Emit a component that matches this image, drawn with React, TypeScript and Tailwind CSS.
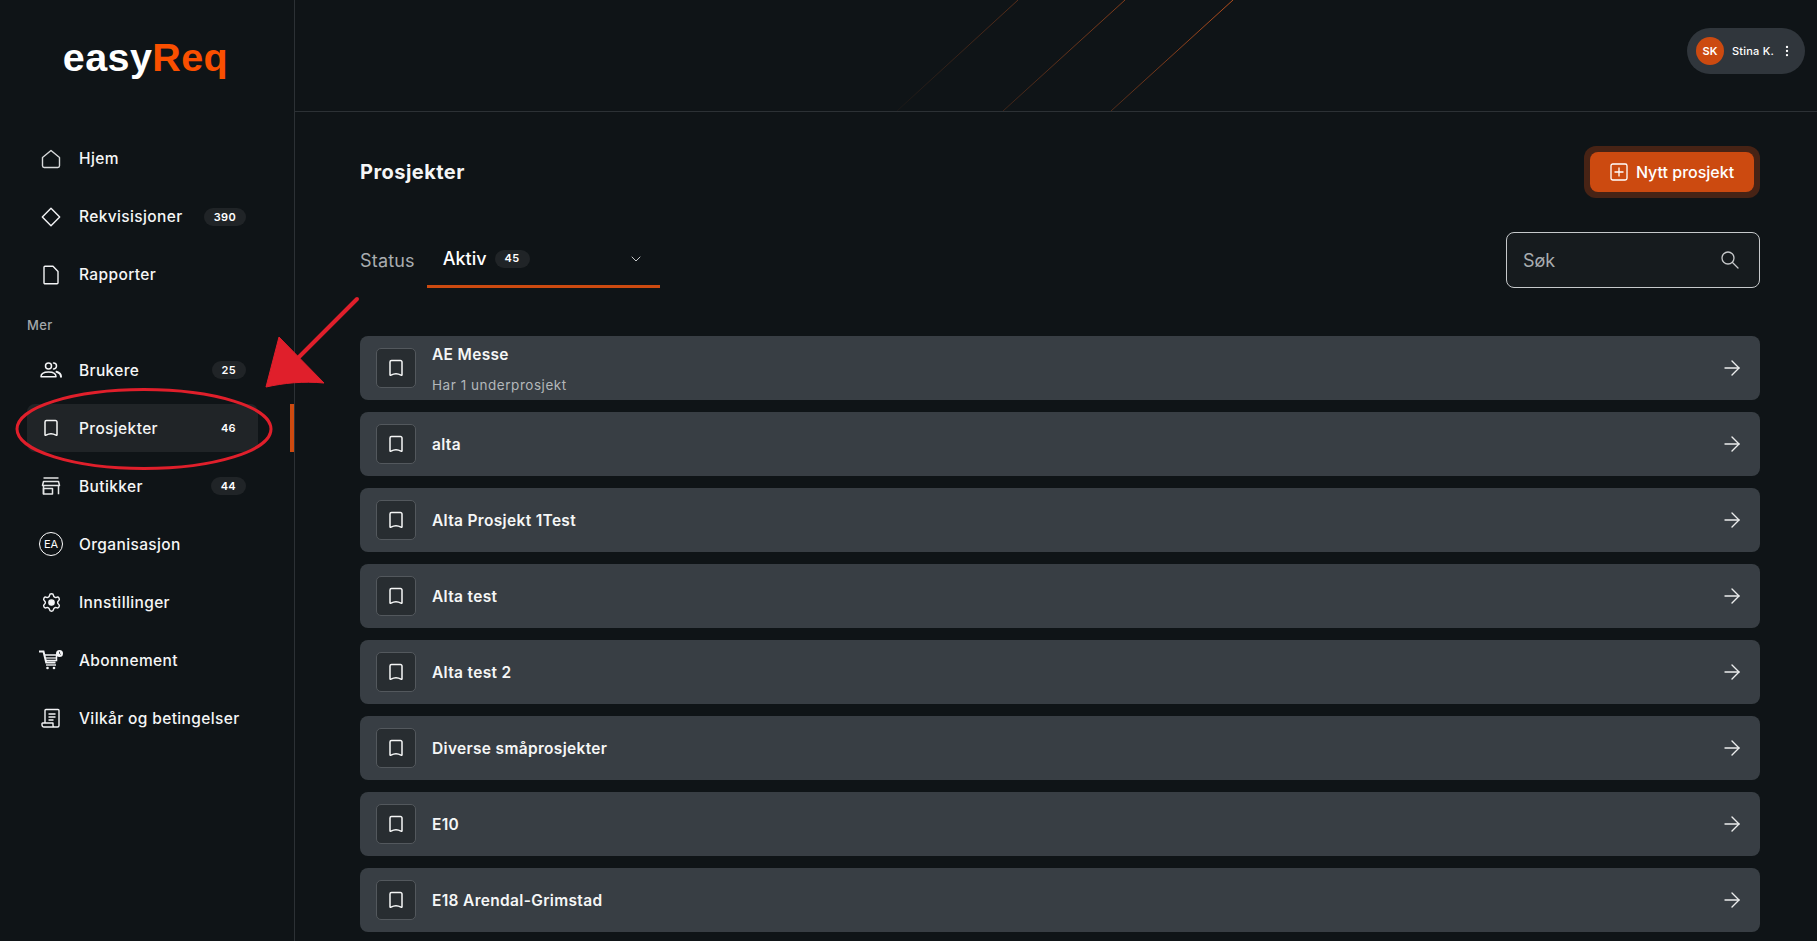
import { ArrowRight, ChevronDown, EllipsisVertical, Settings } from "lucide-react";

const font = { fontFamily: "Inter" };

function Badge({ children, bare }: { children: string; bare?: boolean }) {
  return (
    <span
      className={`flex h-[18px] items-center justify-center rounded-full px-[10px] text-[11px] font-semibold tracking-[0.03em] text-white ${
        bare ? "" : "bg-[#202427]"
      }`}
    >
      {children}
    </span>
  );
}

function BookmarkIcon() {
  return (
    <svg width="16" height="18" viewBox="0 0 16 18" fill="none" stroke="#f5f6f6" strokeWidth="1.5" strokeLinejoin="round">
      <path d="M2 3a1.500 1.500 0 0 1 1.500-1.500h9A1.500 1.500 0 0 1 14 3v12.700c0 .6-.5.8-1 .5-3.300-2-6.700-2-10 0-.5.3-1 .1-1-.5z" />
    </svg>
  );
}

function HomeIcon() {
  return (
    <svg width="20" height="20" viewBox="0 0 20 20" fill="none" stroke="#d8dadb" strokeWidth="1.4" strokeLinejoin="round">
      <path d="M1.500 8.500 10 1.500l8.500 7v8.300a1.700 1.700 0 0 1-1.700 1.700H3.200a1.700 1.700 0 0 1-1.700-1.700z" />
    </svg>
  );
}

function DiamondIcon() {
  return (
    <svg width="20" height="20" viewBox="0 0 20 20" fill="none" stroke="#f3f4f6" strokeWidth="1.4" strokeLinejoin="round">
      <path d="M10 1.300 18.700 10 10 18.700 1.300 10z" />
    </svg>
  );
}

function FileIcon() {
  return (
    <svg width="20" height="20" viewBox="0 0 20 20" fill="none" stroke="#f3f4f6" strokeWidth="1.4" strokeLinejoin="round">
      <path d="M3 2.200a1 1 0 0 1 1-1h8l5 5.300v11.300a1 1 0 0 1-1 1H4a1 1 0 0 1-1-1z" />
    </svg>
  );
}

function UsersIcon() {
  return (
    <svg width="22" height="16" viewBox="0 0 22 16" fill="none" stroke="#f3f4f6" strokeWidth="1.500" strokeLinecap="round" strokeLinejoin="round">
      <circle cx="8.500" cy="4" r="3" />
      <path d="M1 14.800c0-3 3-4.800 7.500-4.800s7.500 1.800 7.500 4.800z" />
      <path d="M13.500 1a3 3 0 0 1 0 6" />
      <path d="M16.500 9.800c2.800.8 4.500 2.500 4.500 5" strokeWidth="2" />
    </svg>
  );
}

function StoreIcon() {
  return (
    <svg width="20" height="18" viewBox="0 0 20 18" fill="none" stroke="#e4e5e6" strokeWidth="1.500" strokeLinejoin="round">
      <path d="M2.500 1h15" />
      <path d="M2.500 4.500h15l1 4h-17z" />
      <path d="M2.500 8.500v8.700M17.500 8.500v8.700" />
      <path d="M2.500 11.500h9v5.500h-9z" />
    </svg>
  );
}

function CartIcon() {
  return (
    <svg width="24" height="20" viewBox="0 0 24 20" fill="none" stroke="#f3f4f6">
      <path d="M0 1.500h4.500l2.700 11h9.300" strokeWidth="2" />
      <path d="M5.500 5h12v5.500H6.800" strokeWidth="1.500" />
      <path d="M6.500 8h11" strokeWidth="1.200" />
      <path d="M7 15h10" strokeWidth="1.400" />
      <circle cx="8.500" cy="18" r="1.300" fill="#f3f4f6" stroke="none" />
      <circle cx="15" cy="18" r="1.300" fill="#f3f4f6" stroke="none" />
      <circle cx="20.500" cy="3.500" r="3.500" fill="#f3f4f6" stroke="none" />
      <path d="M20.500 1.800v1.700l1.300 1" stroke="#0f1417" strokeWidth="0.800" />
    </svg>
  );
}

function ScrollIcon() {
  return (
    <svg width="20" height="20" viewBox="0 0 20 20" fill="none" stroke="#f3f4f6" strokeWidth="1.400" strokeLinejoin="round">
      <path d="M4 15V2.500a1 1 0 0 1 1-1h12a1 1 0 0 1 1 1v15a1.500 1.500 0 0 1-1.500 1.500H3a2 2 0 0 1-2-2v-1.500a.5.500 0 0 1 .5-.5h10.500v2.500a1.500 1.500 0 0 0 1.500 1.500" />
      <path d="M7.500 6h7M7.500 9h7M7.500 12h5" />
    </svg>
  );
}

function PlusSquare() {
  return (
    <svg width="18" height="18" viewBox="0 0 18 18" fill="none" stroke="#ffffff" strokeWidth="1.300">
      <rect x="1" y="1" width="16" height="16" rx="1.800" />
      <path d="M9 4.500v9M4.500 9h9" />
    </svg>
  );
}

function SearchIcon() {
  return (
    <svg width="18" height="18" viewBox="0 0 18 18" fill="none" stroke="#c6c8ca" strokeWidth="1.300" strokeLinecap="round">
      <circle cx="7" cy="7" r="6" />
      <path d="M11.500 11.500 17 17" />
    </svg>
  );
}

type NavEntry = { label: string; icon: React.ReactNode; count?: string; active?: boolean };

const topNav: NavEntry[] = [
  { label: "Hjem", icon: <HomeIcon /> },
  { label: "Rekvisisjoner", icon: <DiamondIcon />, count: "390" },
  { label: "Rapporter", icon: <FileIcon /> },
];

const moreNav: NavEntry[] = [
  { label: "Brukere", icon: <UsersIcon />, count: "25" },
  { label: "Prosjekter", icon: <BookmarkIcon />, count: "46", active: true },
  { label: "Butikker", icon: <StoreIcon />, count: "44" },
  {
    label: "Organisasjon",
    icon: (
      <span className="flex h-6 w-6 items-center justify-center rounded-full border border-white text-[11px] text-white">
        EA
      </span>
    ),
  },
  {
    label: "Innstillinger",
    icon: <Settings size={21} strokeWidth={1.6} color="#f3f4f6" className="[&>circle]:fill-[#f3f4f6]" />,
  },
  { label: "Abonnement", icon: <CartIcon /> },
  { label: "Vilkår og betingelser", icon: <ScrollIcon /> },
];

function NavItem({ item, lower }: { item: NavEntry; lower?: boolean }) {
  return (
    <div className="relative flex h-[58px] items-center">
      <div
        className={`ml-[27px] flex h-12 w-[231px] items-center rounded-lg pr-3 ${
          item.active ? "bg-[#202427]" : ""
        }`}
      >
        <span className="mr-1 flex w-12 shrink-0 items-center justify-center">{item.icon}</span>
        <span className={`text-[15.5px] font-medium tracking-[0.024em] text-[#f5f6f6] ${lower ? "mt-[2px]" : ""}`}>
          {item.label}
        </span>
        {item.count && (
          <span className="ml-auto">
            <Badge bare={item.active}>{item.count}</Badge>
          </span>
        )}
      </div>
      {item.active && <span className="absolute right-0 top-[5px] h-12 w-1 bg-[#cc4a10]" />}
    </div>
  );
}

function Sidebar() {
  return (
    <aside className="w-[295px] shrink-0 border-r border-[#2c3135]">
      <div className="flex h-[130px] items-start justify-center pr-[3px] pt-[31px]">
        <span
          className="text-[39.5px] font-bold leading-[52px] tracking-[0.01em] text-white"
          style={{ fontFamily: "Liberation Sans" }}
        >
          easy<span className="text-[#fa4f00]">Req</span>
        </span>
      </div>
      <nav>
        {topNav.map((item) => (
          <NavItem key={item.label} item={item} />
        ))}
      </nav>
      <div className="ml-[27px] flex h-[37px] items-center pt-[6px] text-[13px] font-medium tracking-[0.03em] text-[#a3a7aa]">
        Mer
      </div>
      <nav>
        {moreNav.map((item) => (
          <NavItem key={item.label} item={item} lower />
        ))}
      </nav>
    </aside>
  );
}

function Header() {
  return (
    <header className="relative flex h-[112px] shrink-0 items-start justify-end overflow-hidden border-b border-[#2c3135] pr-[12px] pt-[28px]">
      {/* diagonal streaks */}
      <svg className="absolute left-0 top-0" width="1000" height="111" fill="none">
        <defs>
          <linearGradient id="streak" x1="0" y1="0" x2="0" y2="111" gradientUnits="userSpaceOnUse">
            <stop offset="0" stopColor="#c4531c" stopOpacity="0.9" />
            <stop offset="1" stopColor="#c4531c" stopOpacity="0.35" />
          </linearGradient>
          <linearGradient id="streakFaint" x1="0" y1="0" x2="0" y2="111" gradientUnits="userSpaceOnUse">
            <stop offset="0" stopColor="#c4531c" stopOpacity="0.4" />
            <stop offset="1" stopColor="#c4531c" stopOpacity="0.05" />
          </linearGradient>
        </defs>
        <path d="M723 0 602 111" stroke="url(#streakFaint)" />
        <path d="M830 0 708 111" stroke="url(#streak)" strokeOpacity="0.7" />
        <path d="M938 0 816 111" stroke="url(#streak)" />
      </svg>
      <div className="relative flex h-[46px] w-[118px] items-center rounded-full bg-[#30363c] pl-[9px]">
        <span className="flex h-7 w-7 items-center justify-center rounded-full bg-[#cc4a10] text-[11px] font-semibold text-white">
          SK
        </span>
        <span className="ml-2 text-[11px] font-medium tracking-[0.02em] text-white">Stina K.</span>
        <EllipsisVertical size={14} color="#ffffff" className="ml-[6px]" />
      </div>
    </header>
  );
}

const projects = [
  { name: "AE Messe", sub: "Har 1 underprosjekt" },
  { name: "alta" },
  { name: "Alta Prosjekt 1Test" },
  { name: "Alta test" },
  { name: "Alta test 2" },
  { name: "Diverse småprosjekter" },
  { name: "E10" },
  { name: "E18 Arendal-Grimstad" },
];

function ProjectRow({ name, sub }: { name: string; sub?: string }) {
  return (
    <div className="flex h-16 shrink-0 items-center rounded-lg bg-[#383e44] pl-4 pr-4">
      <span className="flex h-10 w-10 items-center justify-center rounded-[5px] border border-[#53585d] bg-[#282d31]">
        <BookmarkIcon />
      </span>
      <div className="ml-4 mt-[2px] flex flex-col">
        <span className="text-[15.5px] font-semibold tracking-[0.021em] text-[#f5f6f6]">{name}</span>
        {sub && <span className="mt-[9px] text-[13.5px] tracking-[0.04em] text-[#b3b7ba]">{sub}</span>}
      </div>
      <ArrowRight size={24} strokeWidth={1.4} color="#eceded" className="ml-auto" />
    </div>
  );
}

function Content() {
  return (
    <main className="flex min-h-0 flex-1 flex-col overflow-hidden pl-[65px] pr-[57px]">
      <div className="mt-[34px] flex h-[52px] items-center justify-between">
        <h1 className="text-[20px] font-bold tracking-[0.023em] text-[#f5f6f6]">Prosjekter</h1>
        <span className="rounded-xl bg-[#472315] p-[6px]">
          <span className="flex h-10 w-[164px] items-center justify-center gap-2 rounded-lg bg-[#cc4a10] text-[16px] font-medium text-white">
            <PlusSquare />
            Nytt prosjekt
          </span>
        </span>
      </div>
      <div className="mt-[34px] flex items-center justify-between">
        <div className="flex items-center">
          <span className="text-[18px] tracking-[0.01em] text-[#a9adb0]">Status</span>
          <div className="ml-[12px] flex h-14 w-[233px] items-center border-b-[3px] border-[#cc4a10] pl-4 pr-4">
            <span className="text-[18px] font-medium text-white">Aktiv</span>
            <span className="ml-2">
              <Badge>45</Badge>
            </span>
            <ChevronDown size={16} strokeWidth={1.5} color="#c6c8ca" className="ml-auto" />
          </div>
        </div>
        <div className="flex h-14 w-[254px] items-center justify-between rounded-lg border border-[#c6c9cb] bg-[#161b1e] pl-4 pr-5">
          <span className="text-[18px] text-[#a9adb0]">Søk</span>
          <SearchIcon />
        </div>
      </div>
      <div className="mt-12 flex flex-col gap-3">
        {projects.map((p) => (
          <ProjectRow key={p.name} name={p.name} sub={p.sub} />
        ))}
      </div>
    </main>
  );
}

export default function App() {
  return (
    <div className="relative flex h-[941px] w-[1817px] overflow-hidden bg-[#0f1417]" style={font}>
      <Sidebar />
      <div className="flex min-w-0 flex-1 flex-col">
        <Header />
        <Content />
      </div>
      {/* red annotation drawn over the page */}
      <svg className="pointer-events-none absolute left-0 top-0" width="1817" height="941" fill="none">
        <ellipse cx="144" cy="429" rx="127" ry="39.500" stroke="#e01f2b" strokeWidth="3" />
        <path d="M357 299 298 358" stroke="#e01f2b" strokeWidth="4" strokeLinecap="round" />
        <path d="M279 337 324 383C303 381 284 383 266 387Z" fill="#e01f2b" stroke="#e01f2b" strokeLinejoin="round" />
      </svg>
    </div>
  );
}
